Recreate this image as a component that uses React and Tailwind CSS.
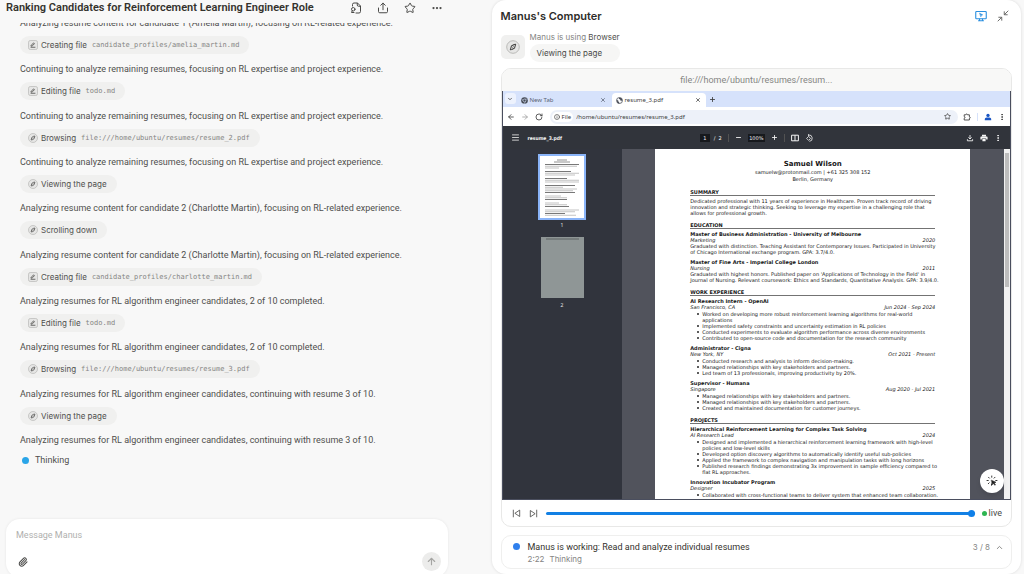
import {
  ArrowLeft, ArrowRight, ArrowUp, ChevronDown, ChevronUp, Ellipsis, EllipsisVertical,
  Info, Menu, Minus, Paperclip, Plus, RotateCw, Star, X,
} from 'lucide-react';

const steps = [
  { text: 'Analyzing resume content for candidate 1 (Amelia Martin), focusing on RL-related experience.', icon: 'file', action: 'Creating file', target: 'candidate_profiles/amelia_martin.md' },
  { text: 'Continuing to analyze remaining resumes, focusing on RL expertise and project experience.', icon: 'file', action: 'Editing file', target: 'todo.md' },
  { text: 'Continuing to analyze remaining resumes, focusing on RL expertise and project experience.', icon: 'browser', action: 'Browsing', target: 'file:///home/ubuntu/resumes/resume_2.pdf' },
  { text: 'Continuing to analyze remaining resumes, focusing on RL expertise and project experience.', icon: 'browser', action: 'Viewing the page' },
  { text: 'Analyzing resume content for candidate 2 (Charlotte Martin), focusing on RL-related experience.', icon: 'browser', action: 'Scrolling down' },
  { text: 'Analyzing resume content for candidate 2 (Charlotte Martin), focusing on RL-related experience.', icon: 'file', action: 'Creating file', target: 'candidate_profiles/charlotte_martin.md' },
  { text: 'Analyzing resumes for RL algorithm engineer candidates, 2 of 10 completed.', icon: 'file', action: 'Editing file', target: 'todo.md' },
  { text: 'Analyzing resumes for RL algorithm engineer candidates, 2 of 10 completed.', icon: 'browser', action: 'Browsing', target: 'file:///home/ubuntu/resumes/resume_3.pdf' },
  { text: 'Analyzing resumes for RL algorithm engineer candidates, continuing with resume 3 of 10.', icon: 'browser', action: 'Viewing the page' },
  { text: 'Analyzing resumes for RL algorithm engineer candidates, continuing with resume 3 of 10.' },
];

const education = [
  {
    title: 'Master of Business Administration - University of Melbourne', place: 'Marketing', date: '2020',
    lines: ['Graduated with distinction. Teaching Assistant for Contemporary Issues. Participated in University', 'of Chicago International exchange program. GPA: 3.7/4.0.'],
  },
  {
    title: 'Master of Fine Arts - Imperial College London', place: 'Nursing', date: '2011',
    lines: ["Graduated with highest honors. Published paper on 'Applications of Technology in the Field' in", 'Journal of Nursing. Relevant coursework: Ethics and Standards, Quantitative Analysis. GPA: 3.9/4.0.'],
  },
];

// each bullet is a list of printed lines
const work = [
  {
    title: 'AI Research Intern - OpenAI', place: 'San Francisco, CA', date: 'Jun 2024 - Sep 2024',
    bullets: [
      ['Worked on developing more robust reinforcement learning algorithms for real-world', 'applications'],
      ['Implemented safety constraints and uncertainty estimation in RL policies'],
      ['Conducted experiments to evaluate algorithm performance across diverse environments'],
      ['Contributed to open-source code and documentation for the research community'],
    ],
  },
  {
    title: 'Administrator - Cigna', place: 'New York, NY', date: 'Oct 2021 - Present',
    bullets: [
      ['Conducted research and analysis to inform decision-making.'],
      ['Managed relationships with key stakeholders and partners.'],
      ['Led team of 13 professionals, improving productivity by 20%.'],
    ],
  },
  {
    title: 'Supervisor - Humana', place: 'Singapore', date: 'Aug 2020 - Jul 2021',
    bullets: [
      ['Managed relationships with key stakeholders and partners.'],
      ['Managed relationships with key stakeholders and partners.'],
      ['Created and maintained documentation for customer journeys.'],
    ],
  },
];

const projects = [
  {
    title: 'Hierarchical Reinforcement Learning for Complex Task Solving', place: 'AI Research Lead', date: '2024',
    bullets: [
      ['Designed and implemented a hierarchical reinforcement learning framework with high-level', 'policies and low-level skills'],
      ['Developed option discovery algorithms to automatically identify useful sub-policies'],
      ['Applied the framework to complex navigation and manipulation tasks with long horizons'],
      ['Published research findings demonstrating 3x improvement in sample efficiency compared to', 'flat RL approaches.'],
    ],
  },
  {
    title: 'Innovation Incubator Program', place: 'Designer', date: '2025',
    bullets: [
      ['Collaborated with cross-functional teams to deliver system that enhanced team collaboration.'],
    ],
  },
];

function CompassIcon({ className }) {
  return (
    <svg viewBox="0 0 20 20" className={className} fill="none" aria-hidden="true">
      <circle cx="10" cy="10" r="9" fill="#e6e6e5" stroke="#b8b8b6" strokeWidth="1.4" />
      <path d="M13.8 6.2 12.2 11.4 8.400 13.6 6.200 13.8 7.800 8.600 11.600 6.400Z" stroke="#4a4a48" strokeWidth="1.5" strokeLinejoin="round" />
      <path d="M9.2 10.8 10.8 9.2" stroke="#4a4a48" strokeWidth="1.2" />
    </svg>
  );
}

function FileEditIcon({ className }) {
  return (
    <svg viewBox="0 0 20 20" className={className} fill="none" aria-hidden="true">
      <rect x="1" y="1" width="18" height="18" rx="3.5" fill="#e6e6e5" stroke="#b8b8b6" strokeWidth="1.4" />
      <path d="M6 11.200 11 5.800 13 7.400 8.600 11.600 6 12.400Z" stroke="#4a4a48" strokeWidth="1.6" strokeLinejoin="round" />
      <path d="M6 14.500H14" stroke="#4a4a48" strokeWidth="1.6" strokeLinecap="round" />
    </svg>
  );
}

function FileSearchIcon() {
  return (
    <svg viewBox="0 0 24 24" className="size-3" fill="none" stroke="currentColor" strokeWidth="2" strokeLinecap="round" strokeLinejoin="round">
      <path d="M5 8V5a3 3 0 0 1 3-3h7l6 6v11a3 3 0 0 1-3 3h-6" />
      <path d="M14.5 2.5V6a2.500 2.500 0 0 0 2.500 2.500h3.500" />
      <circle cx="6.500" cy="14.500" r="3.500" />
      <path d="M4.500 17.500 3 21h5" />
    </svg>
  );
}

function ShareIcon() {
  return (
    <svg viewBox="0 0 24 24" className="size-3" fill="none" stroke="currentColor" strokeWidth="2" strokeLinecap="round" strokeLinejoin="round">
      <path d="M12 15.500V2.500M7.500 6.500 12 2.200l4.500 4.300" />
      <path d="M3 12v7a2.500 2.500 0 0 0 2.500 2.500h13A2.500 2.500 0 0 0 21 19v-7" />
    </svg>
  );
}

function ScreenIcon() {
  return (
    <svg viewBox="0 0 24 24" className="size-3" fill="none" stroke="currentColor" strokeWidth="2.200" strokeLinecap="round" strokeLinejoin="round">
      <rect x="1.500" y="3" width="21" height="14.500" rx="1.500" />
      <path d="M7 21.500h10M9 18v3M15 18v3" />
      <path d="m9.500 6.500 6 3.200-2.600.9-1 2.600Z" fill="currentColor" strokeWidth="1" />
    </svg>
  );
}

function CollapseIcon() {
  return (
    <svg viewBox="0 0 24 24" className="size-3" fill="none" stroke="currentColor" strokeWidth="2" strokeLinecap="round" strokeLinejoin="round">
      <path d="M22 2 14.500 9.500M14.500 3.500v6h6M2 22l7.500-7.500M9.500 20.500v-6h-6" />
    </svg>
  );
}

function SkipIcon({ flip }) {
  return (
    <svg viewBox="0 0 24 24" className={flip ? 'size-[9px] rotate-180' : 'size-[9px]'} fill="none" stroke="currentColor" strokeWidth="2.200" strokeLinecap="round" strokeLinejoin="round">
      <path d="M3.500 3v18M20.500 4v16L8.500 12Z" />
    </svg>
  );
}

function TakeOverIcon() {
  return (
    <svg viewBox="0 0 24 24" className="size-3" fill="none" stroke="#222" strokeWidth="1.800" strokeLinecap="round">
      <path d="M11.500 2v2.500M5 4.500l1.800 1.800M2 11h2.500M4.500 17.500l1.800-1.800M18 4.500l-1.800 1.800M19.500 11H22M11 18v2.500" />
      <path d="m11 10.500 9 4-3.600 1.500 2.600 3.600-1.400 1-2.600-3.600-2.200 2.500Z" fill="#222" strokeWidth="1" />
    </svg>
  );
}

function ChromeIcon() {
  return (
    <svg viewBox="0 0 20 20" className="size-[7px] shrink-0" aria-hidden="true">
      <circle cx="10" cy="10" r="9.500" fill="#474c56" />
      <path d="M10 6h9M6.500 12 2 4.500M13.500 12 9 19.500" stroke="#d6e2fb" strokeWidth="1.500" />
      <circle cx="10" cy="10" r="4" fill="#474c56" stroke="#d6e2fb" strokeWidth="1.800" />
    </svg>
  );
}

function GlobeIcon() {
  return (
    <svg viewBox="0 0 20 20" className="size-[7px] shrink-0" fill="none" aria-hidden="true">
      <circle cx="10" cy="10" r="8.500" stroke="#474c56" strokeWidth="2.200" />
      <path d="M2 7.500 7 11v2.500l2.500 2V19L4 17ZM8 2l1 4 3 1 1 3.500h3L18.500 9 15 3Z" fill="#474c56" />
    </svg>
  );
}

function ExtensionIcon() {
  return (
    <svg viewBox="0 0 20 20" className="size-2" fill="none" stroke="currentColor" strokeWidth="2.200" strokeLinejoin="round">
      <path d="M3 4.500h4a2 2 0 0 1 4 0h5v5a2 2 0 0 1 0 4v4H3v-4.500a2 2 0 0 0 0-4Z" />
    </svg>
  );
}

function ProfileIcon() {
  return (
    <svg viewBox="0 0 20 20" className="size-2" fill="#1a56c4">
      <circle cx="10" cy="6" r="4.200" />
      <path d="M2 18v-3c0-3 4-4 8-4s8 1 8 4v3Z" />
    </svg>
  );
}

function RotateIcon() {
  return (
    <svg viewBox="0 0 20 20" className="size-2" fill="none" stroke="currentColor" strokeWidth="2">
      <path d="M9 6 14 11l-5 5-5-5Z" />
      <path d="M9 2.500a8 8 0 0 1 2 16" />
      <path d="M10.500 0 7.500 2.800l3 2.700" />
    </svg>
  );
}

function DownloadIcon() {
  return (
    <svg viewBox="0 0 20 20" className="size-2" fill="none" stroke="currentColor" strokeWidth="2.200">
      <path d="M10 2.500v9M6 8.500l4 4 4-4M3.500 13v4h13v-4" />
    </svg>
  );
}

function PrintIcon() {
  return (
    <svg viewBox="0 0 20 20" className="size-2" fill="currentColor">
      <path d="M5 2h10v3.500H5ZM3 6.500h14a2 2 0 0 1 2 2V14h-3.500v-3h-11v3H1V8.500a2 2 0 0 1 2-2ZM6 12.500h8V18H6Z" />
    </svg>
  );
}

function Entry({ title, place, date, lines = [], bullets = [] }) {
  return (
    <article>
      <h3 className="font-bold">{title}</h3>
      <div className="flex justify-between italic">
        <span>{place}</span>
        <span>{date}</span>
      </div>
      {lines.map((line) => <p key={line}>{line}</p>)}
      {bullets.length > 0 && (
        <ul className="mt-px pl-3">
          {bullets.map((bullet, i) => (
            <li key={i} className="relative">
              <span className="absolute top-[2px] -left-[5px] size-[2px] rounded-full bg-neutral-800" />
              {bullet.map((line) => <p key={line}>{line}</p>)}
            </li>
          ))}
        </ul>
      )}
    </article>
  );
}

function Section({ title, children }) {
  return (
    <section className="mt-[6px]">
      <h2 className="border-b border-neutral-500 font-bold">{title}</h2>
      <div className="mt-[2px] flex flex-col gap-1">{children}</div>
    </section>
  );
}

function Resume() {
  return (
    <div className="mx-auto w-[315px] bg-white px-[35px] pt-[11px] pb-1 font-['DejaVu_Sans',sans-serif] text-[5px] leading-[6px] whitespace-nowrap text-neutral-900">
      <header className="text-center leading-[7px]">
        <h1 className="text-[7px] leading-[9px] font-bold">Samuel Wilson</h1>
        <p>samuelw@protonmail.com | +61 325 308 152</p>
        <p>Berlin, Germany</p>
      </header>
      <Section title="SUMMARY">
        <div>
          <p>Dedicated professional with 11 years of experience in Healthcare. Proven track record of driving</p>
          <p>innovation and strategic thinking. Seeking to leverage my expertise in a challenging role that</p>
          <p>allows for professional growth.</p>
        </div>
      </Section>
      <Section title="EDUCATION">{education.map((e) => <Entry key={e.title} {...e} />)}</Section>
      <Section title="WORK EXPERIENCE">{work.map((e) => <Entry key={e.title} {...e} />)}</Section>
      <Section title="PROJECTS">{projects.map((e) => <Entry key={e.title} {...e} />)}</Section>
    </div>
  );
}

// widths of the tiny text rows in the first page thumbnail
const thumbRows = [34, 32, 14, 0, 26, 34, 30, 0, 22, 34, 34, 0, 30, 18, 32, 28, 30, 0, 16, 22, 22, 0, 14, 22, 24, 0, 34, 30, 20, 31];

function Thumbnails() {
  return (
    <aside className="flex w-[119px] shrink-0 flex-col items-center bg-[#31343d] pt-[5px] text-[5px] leading-[6px] text-neutral-200">
      <button aria-label="Page 1" className="h-[66px] w-12 border-2 border-[#8ab4f8] bg-white">
        <svg viewBox="0 0 44 62" className="size-full">
          <path d="M17 4h10M14 6h16" stroke="#777" strokeWidth="0.8" />
          {thumbRows.map((w, i) => (
            <path key={i} d={`M5 ${8.5 + i * 1.75}h${w}`} stroke={i % 4 === 0 ? '#555' : '#b4b4b4'} strokeWidth="0.8" />
          ))}
        </svg>
      </button>
      <span className="mt-[2px]">1</span>
      <button aria-label="Page 2" className="mt-[9px] h-[61px] w-[43px] bg-[#8f9696]">
        <svg viewBox="0 0 43 61" className="size-full">
          <path d="M5 2h33" stroke="#5d6262" />
        </svg>
      </button>
      <span className="mt-[4px]">2</span>
    </aside>
  );
}

function BrowserWindow() {
  return (
    <div className="flex min-h-0 flex-1 flex-col border border-t-0 border-[#4a4e5e] font-['Noto_Sans',sans-serif] text-[6px] leading-2 text-neutral-700">
      <div className="flex h-4 shrink-0 items-end bg-[#d6e2fb]">
        <button aria-label="Search tabs" className="mb-[3px] ml-[2px] grid size-[11px] place-items-center rounded-[3px] bg-[#edf2fd]">
          <ChevronDown size={6} strokeWidth={3} />
        </button>
        <div className="flex h-[14px] w-24 items-center gap-[2px] pr-[6px] pl-[5px] text-[#5a6274]">
          <ChromeIcon />
          <span className="flex-1">New Tab</span>
          <button aria-label="Close New Tab"><X size={6} strokeWidth={3} /></button>
        </div>
        <div className="flex h-[14px] w-[94px] items-center gap-[2px] rounded-t-[4px] bg-white pr-[5px] pl-[4px]">
          <GlobeIcon />
          <span className="flex-1">resume_3.pdf</span>
          <button aria-label="Close resume_3.pdf"><X size={6} strokeWidth={3} /></button>
        </div>
        <button aria-label="New tab" className="mb-1 ml-[3px]"><Plus size={7} strokeWidth={3} /></button>
      </div>

      <div className="flex h-[19px] shrink-0 items-center bg-white pr-[4px] pl-[4px]">
        <div className="flex gap-[6px]">
          <button aria-label="Back"><ArrowLeft size={8} strokeWidth={2.500} /></button>
          <button aria-label="Forward" className="text-neutral-400"><ArrowRight size={8} strokeWidth={2.500} /></button>
          <button aria-label="Reload"><RotateCw size={8} strokeWidth={2.500} /></button>
        </div>
        <div className="ml-[7px] flex h-[14px] flex-1 items-center gap-[3px] rounded-full bg-[#edf1f9] pr-[7px] pl-[2px]">
          <span className="flex h-[10px] items-center gap-[2px] rounded-full bg-white px-[2px]">
            <Info size={6} strokeWidth={2.500} />
            File
          </span>
          <input aria-label="Address" defaultValue="/home/ubuntu/resumes/resume_3.pdf" className="min-w-0 flex-1 outline-none" />
          <button aria-label="Bookmark"><Star size={7} strokeWidth={2.500} /></button>
        </div>
        <div className="ml-[5px] flex items-center gap-[6px]">
          <button aria-label="Extensions"><ExtensionIcon /></button>
          <span className="h-2 w-px bg-[#d6e2fb]" />
          <button aria-label="Profile"><ProfileIcon /></button>
          <button aria-label="Menu"><EllipsisVertical size={8} strokeWidth={3} /></button>
        </div>
      </div>

      <div className="grid h-[23px] shrink-0 grid-cols-3 items-center bg-[#31343b] px-2 text-neutral-100">
        <div className="flex items-center gap-2">
          <button aria-label="Toggle sidebar" className="text-neutral-300"><Menu size={9} strokeWidth={2.500} /></button>
          <span className="text-[5px] font-bold font-['DejaVu_Sans_Condensed','DejaVu_Sans',sans-serif]">resume_3.pdf</span>
        </div>
        <div className="flex items-center justify-center gap-[6px] font-['DejaVu_Sans',sans-serif] text-[5px]">
          <span className="flex items-center gap-1">
            <input aria-label="Page number" defaultValue="1" className="h-2 w-[10px] bg-[#17191d] text-center outline-none" />
            <span>/&nbsp; 2</span>
          </span>
          <span className="h-2 w-px bg-neutral-600" />
          <button aria-label="Zoom out"><Minus size={7} strokeWidth={3} /></button>
          <input aria-label="Zoom" defaultValue="100%" className="h-2 w-[17px] bg-[#17191d] text-center outline-none" />
          <button aria-label="Zoom in"><Plus size={7} strokeWidth={3} /></button>
          <span className="h-2 w-px bg-neutral-600" />
          <button aria-label="Fit to page">
            <svg viewBox="0 0 20 20" className="size-2" fill="none" stroke="currentColor" strokeWidth="2.500"><path d="M1.500 3h17v14h-17ZM10 3v14" /></svg>
          </button>
          <button aria-label="Rotate"><RotateIcon /></button>
        </div>
        <div className="flex items-center justify-end gap-[6px]">
          <button aria-label="Download"><DownloadIcon /></button>
          <button aria-label="Print"><PrintIcon /></button>
          <button aria-label="More"><EllipsisVertical size={8} strokeWidth={3} /></button>
        </div>
      </div>

      <div className="relative flex min-h-0 flex-1">
        <Thumbnails />
        <div className="min-w-0 flex-1 overflow-hidden bg-[#51535c]">
          <Resume />
        </div>
        <div className="flex w-[6px] shrink-0 flex-col items-center bg-[#f1f1f1] pt-1">
          <div className="h-[134px] w-[4px] bg-[#bdbdbd]" />
        </div>
        <button aria-label="Take over" className="absolute right-[6px] bottom-[6px] grid size-6 place-items-center rounded-full bg-white shadow-md">
          <TakeOverIcon />
        </button>
      </div>
    </div>
  );
}

function ChatColumn() {
  return (
    <main className="flex min-h-0 flex-col pr-11 pl-[6px]">
      <header className="flex h-[23px] shrink-0 items-center justify-between pr-[5px] pb-[7px]">
        <h1 className="text-[11px] leading-4 font-semibold whitespace-nowrap text-[#34322d]">
          Ranking Candidates for Reinforcement Learning Engineer Role
        </h1>
        <div className="flex gap-[15px] text-[#4a4a48]">
          <button aria-label="Files"><FileSearchIcon /></button>
          <button aria-label="Share"><ShareIcon /></button>
          <button aria-label="Favorite"><Star size={12} strokeWidth={2} /></button>
          <button aria-label="More"><Ellipsis size={12} strokeWidth={2.500} /></button>
        </div>
      </header>

      <div className="flex min-h-0 flex-1 flex-col overflow-hidden pl-[14px] text-[9px] leading-3 text-[#4f4f4d]">
        <ul className="-mt-[6px] flex min-h-0 flex-1 flex-col justify-between">
          {steps.map((step, i) => (
            <li key={i} className="flex flex-col items-start gap-[7px] whitespace-nowrap">
              <p>{step.text}</p>
              {step.action && (
                <button className="flex h-[18px] items-center rounded-full bg-[#f0f0ef] pr-[10px] pl-2 font-['Inter',sans-serif] text-[8px]">
                  {step.icon === 'file' ? <FileEditIcon className="size-[10px]" /> : <CompassIcon className="size-[10px]" />}
                  <span className="ml-[3px]">{step.action}</span>
                  {step.target && (
                    <code className="ml-[5px] font-['DejaVu_Sans_Mono',monospace] text-[7px] text-[#858583]">{step.target}</code>
                  )}
                </button>
              )}
            </li>
          ))}
        </ul>
        <p className="mt-2 mb-[53px] ml-[2px] flex items-center gap-[6px]">
          <span className="size-[7px] rounded-full bg-[#2aa5e8]" />
          Thinking
        </p>
      </div>

      <form className="-mb-[3px] shrink-0 rounded-[14px] bg-white px-[10px] pt-[10px] pb-[6px] shadow-[0_0_3px_rgba(0,0,0,0.08)]">
        <textarea
          aria-label="Message Manus"
          placeholder="Message Manus"
          rows={1}
          className="block h-3 w-full resize-none text-[9px] leading-3 outline-none placeholder:text-[#b0b0ae]"
        />
        <div className="mt-[11px] -mr-[3px] flex items-center justify-between pl-[2px]">
          <button type="button" aria-label="Attach file" className="text-[#4a4a48]"><Paperclip size={10} strokeWidth={2.500} /></button>
          <button aria-label="Send" className="grid size-[19px] place-items-center rounded-full bg-[#ececeb] text-[#a5a5a3]">
            <ArrowUp size={11} strokeWidth={2.500} />
          </button>
        </div>
      </form>
    </main>
  );
}

function ComputerPanel() {
  return (
    <section className="mr-[3px] flex min-h-0 flex-col rounded-[14px] bg-white px-[9px] pt-[9px] pb-[5px] shadow-[0_0_3px_rgba(0,0,0,0.12)]">
      <header className="flex items-center justify-between pr-[3px]">
        <h2 className="font-['Inter',sans-serif] text-[11px] leading-[14px] font-semibold text-[#2d2c29]">Manus's Computer</h2>
        <div className="flex gap-[10px]">
          <button aria-label="Take control" className="text-[#2a8fe0]"><ScreenIcon /></button>
          <button aria-label="Minimize" className="text-[#6d6d6b]"><CollapseIcon /></button>
        </div>
      </header>

      <div className="mt-2 flex items-center gap-[5px]">
        <div className="grid size-6 place-items-center rounded-[5px] bg-[#f0f0ef]">
          <CompassIcon className="size-[14px]" />
        </div>
        <div className="font-['Inter',sans-serif] text-[8px]">
          <p className="leading-3 text-[#858583]">Manus is using <span className="text-[#4f4f4d]">Browser</span></p>
          <p className="mt-px rounded-full bg-[#f6f6f5] px-[7px] leading-[18px] text-[#4a4a48]">Viewing the page</p>
        </div>
      </div>

      <div className="mt-[6px] flex min-h-0 flex-1 flex-col overflow-hidden rounded-[10px] border border-[#e8e8e7]">
        <p className="h-[22px] shrink-0 bg-[#f8f8f7] text-center text-[9px] leading-[22px] text-[#858583]">file:///home/ubuntu/resumes/resum...</p>
        <BrowserWindow />
        <div className="flex h-[26px] shrink-0 items-center pr-[9px] pl-[10px] text-[#4a4a48]">
          <button aria-label="Previous step"><SkipIcon /></button>
          <button aria-label="Next step" className="ml-2"><SkipIcon flip /></button>
          <input
            type="range"
            aria-label="Timeline"
            defaultValue={100}
            className="ml-2 h-[3px] min-w-0 flex-1 appearance-none rounded-full bg-[#1280e4] [&::-webkit-slider-thumb]:size-[7px] [&::-webkit-slider-thumb]:appearance-none [&::-webkit-slider-thumb]:rounded-full [&::-webkit-slider-thumb]:bg-[#0f7fe8]"
          />
          <span className="ml-[7px] size-[5px] rounded-full bg-[#2eb551]" />
          <span className="ml-[2px] text-[9px] leading-3">live</span>
        </div>
      </div>

      <div className="mt-2 flex h-[34px] shrink-0 items-start rounded-[10px] border border-[#efefee] px-[10px] pt-[5px] text-[9px] leading-3">
        <span className="mt-[2px] ml-px size-[7px] rounded-full bg-[#2f80ed]" />
        <div className="ml-2 flex-1">
          <p className="text-[#34322d]">Manus is working: Read and analyze individual resumes</p>
          <p className="flex gap-[5px] font-['Inter',sans-serif] text-[8px] text-[#858583]"><span>2:22</span><span>Thinking</span></p>
        </div>
        <button aria-label="Show all steps" className="mr-[-3px] flex items-center gap-[5px] font-['Inter',sans-serif] text-[8px] text-[#858583]">
          3 / 8
          <ChevronUp size={9} strokeWidth={2.500} />
        </button>
      </div>
    </section>
  );
}

export default function App() {
  return (
    <div className="grid h-screen grid-cols-[48fr_52fr] overflow-hidden bg-[#f8f8f8] font-['Roboto',sans-serif]">
      <ChatColumn />
      <ComputerPanel />
    </div>
  );
}
